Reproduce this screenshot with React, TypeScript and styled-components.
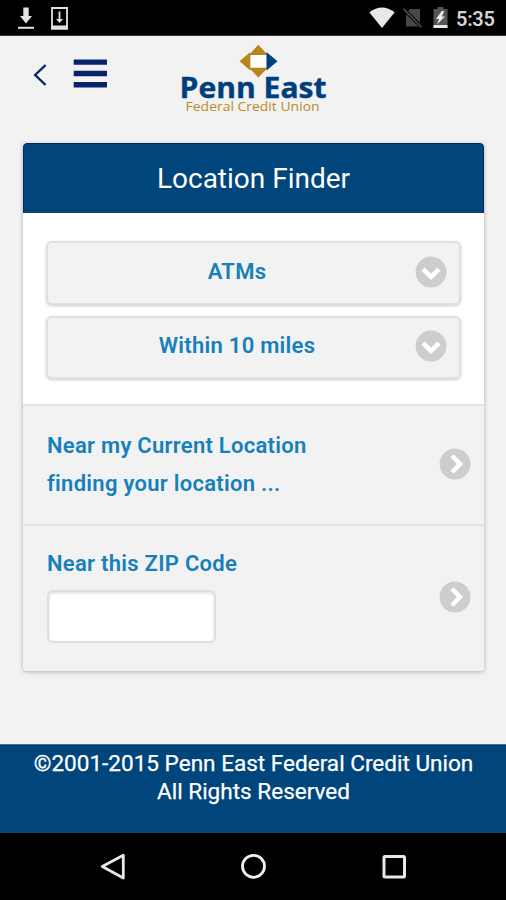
import React from "react";
import styled, { createGlobalStyle } from "styled-components";

const GlobalStyle = createGlobalStyle`
  *, *::before, *::after { box-sizing: border-box; }
  body { margin: 0; background: #f2f2f2; font-family: Roboto, "Liberation Sans", sans-serif; }
`;

const Screen = styled.div`
  width: 506px;
  height: 900px;
  display: flex;
  flex-direction: column;
  overflow: hidden;
  background: #f2f2f2;
`;

const StatusBar = styled.header`
  height: 36px;
  flex: none;
  display: flex;
  align-items: center;
  justify-content: space-between;
  padding: 0 10px 0 18px;
  background: #000;
  border-bottom: 1px solid #333;
`;

const StatusGroup = styled.div<{ $gap: number }>`
  display: flex;
  align-items: center;
  gap: ${(p) => p.$gap}px;
`;

const Clock = styled.span`
  width: 40px;
  padding-top: 3px;
  font-size: 20px;
  line-height: 24px;
  font-weight: 600;
  letter-spacing: -0.3px;
  color: #d4d4d4;
  white-space: nowrap;
`;

const TopBar = styled.nav`
  height: 107px;
  flex: none;
  display: flex;
  align-items: flex-start;
  padding: 8px 0 0 33px;
`;

const IconButton = styled.button<{ $width: number }>`
  width: ${(p) => p.$width}px;
  height: 34px;
  margin-top: 14px;
  padding: 0;
  border: 0;
  background: none;
  display: flex;
`;

const Logo = styled.svg`
  width: 152px;
  height: 70px;
  margin-left: 69px;
`;

const Card = styled.main`
  width: 461px;
  height: 528px;
  flex: none;
  margin-left: 23px;
  display: flex;
  flex-direction: column;
  border-radius: 4px;
  background: #fff;
  overflow: hidden;
  box-shadow: 0 1px 4px rgba(0, 0, 0, 0.28);
`;

const CardTitle = styled.h1`
  height: 70px;
  flex: none;
  margin: 0;
  border: 1px solid #002a68;
  border-bottom-color: #12417a;
  border-radius: 4px 4px 0 0;
  background: #00457c;
  color: #fff;
  font-size: 28px;
  font-weight: 400;
  line-height: 69px;
  text-align: center;
`;

const Filters = styled.section`
  height: 191px;
  flex: none;
  display: flex;
  flex-direction: column;
  gap: 11px;
  padding: 28px 23px 0;
`;

const Select = styled.button`
  height: 63.5px;
  display: grid;
  grid-template-columns: 1fr 32px;
  align-items: center;
  padding: 0 12px 2px 11px;
  border: 2px solid #e0e0e0;
  border-radius: 6px;
  background: #f2f2f2;
  box-shadow: 0 1px 3px rgba(0, 0, 0, 0.2);
  font-family: inherit;
  color: #1580bb;
`;

const Label = styled.span`
  display: block;
  font-size: 22px;
  font-weight: 600;
  line-height: 38px;
  letter-spacing: 0.28px;
  color: #1580bb;
  white-space: nowrap;
`;

const Option = styled.section<{ $height: number; $top: number }>`
  height: ${(p) => p.$height}px;
  flex: none;
  display: flex;
  justify-content: space-between;
  align-items: flex-start;
  padding: ${(p) => p.$top}px 13px 0 24px;
  border: solid #e2e2e2;
  border-width: 2px 0 0;
  background: #f2f2f2;
`;

const ArrowSlot = styled.div<{ $top: number }>`
  height: 32px;
  margin-top: ${(p) => p.$top}px;
`;

const ZipInput = styled.input`
  display: block;
  width: 169px;
  height: 53px;
  margin: 7px 0 0;
  padding: 0 10px;
  border: 2px solid #dedede;
  border-radius: 6px;
  background: #fff;
  box-shadow: inset 0 1px 3px rgba(0, 0, 0, 0.14);
  font: 22px Roboto, sans-serif;
`;

const Footer = styled.footer`
  height: 89px;
  flex: none;
  margin-top: auto;
  padding: 5px 0 0 1px;
  border-top: 1px solid #456f95;
  background: #00457c;
  color: #fff;
  font-size: 22.55px;
  line-height: 28px;
  text-align: center;
  -webkit-text-stroke: 0.25px #fff;
`;

const SystemNav = styled.nav`
  height: 67px;
  flex: none;
  display: flex;
  align-items: center;
  justify-content: center;
  gap: 108px;
  padding-bottom: 1px;
  background: #000;
`;

function RoundArrow({ down }: { down?: boolean }) {
  return (
    <svg width="32" height="32" viewBox="0 0 32 32" fill="none">
      <circle cx="16" cy="16" r="15.4" fill="#cdcdcd" />
      <path d={down ? "M8 13.2L16 20.8L24 13.2" : "M13 7.8L21 16L13 24.2"} stroke="#fff" strokeWidth="4.5" />
    </svg>
  );
}

function StatusIcons() {
  return (
    <>
      <StatusGroup $gap={17}>
        <svg width="16" height="24" viewBox="0 0 16 24" fill="#e2e2e2">
          <path d="M5.3 1.5h5.4v8.4H14L8 17.5 2 9.9h3.3z" />
          <path d="M0 20.8h16v2H0z" />
        </svg>
        <svg width="17" height="24" viewBox="0 0 17 24">
          <path d="M1 2V22.5H16V2z" fill="none" stroke="#e2e2e2" strokeWidth="1.8" />
          <path d="M0 19.5h17v4H0zM0 1h17v2H0zM7.6 5.5h1.8v7.5H12L8.5 17 5 13h2.6z" fill="#e2e2e2" />
        </svg>
      </StatusGroup>
      <StatusGroup $gap={8}>
        <svg width="26" height="22" viewBox="0 0 26 22">
          <path d="M0.3 5.2Q13-4.2 25.7 5.2L13 21z" fill="#e8e8e8" />
        </svg>
        <svg width="20" height="22" viewBox="0 0 20 22">
          <path d="M7 2H17V19.5H3V6z" fill="#484848" />
          <path d="M0 1.5L19 20.5" stroke="#000" strokeWidth="3.4" />
          <path d="M0.5 1.8L18.5 20.3" stroke="#505050" strokeWidth="1.6" />
        </svg>
        <svg width="17" height="22" viewBox="-2 0 17 22">
          <path d="M4.5 0h6v2H14.5V21H.5V2h4z" fill="#555" />
          <path d="M.5 18h14v3H.5zM8.8 4L3 12h3L4 17.4l8-7.9H8.9L11.2 4z" fill="#e8e8e8" />
        </svg>
        <Clock>5:35</Clock>
      </StatusGroup>
    </>
  );
}

export default function App() {
  return (
    <>
      <GlobalStyle />
      <Screen>
        <StatusBar>
          <StatusIcons />
        </StatusBar>

        <TopBar>
          <IconButton $width={14} aria-label="Back">
            <svg width="14" height="34" viewBox="0 0 14 34" fill="none">
              <path d="M12.6 7L2.2 17L12.6 27" stroke="#07246b" strokeWidth="2.4" />
            </svg>
          </IconButton>
          <IconButton $width={60} aria-label="Menu">
            <svg width="60" height="34" viewBox="0 0 60 34" fill="#07246b">
              <path d="M26.7 1.6h33.3v5.2h-33.3zM26.7 12.8h33.3v5.4h-33.3zM26.7 24.1h33.3v5.3h-33.3z" />
            </svg>
          </IconButton>
          <Logo viewBox="176 44 152 70">
            <path d="M258.3 44.8L267.8 55H249z" fill="#b68618" />
            <path d="M258.3 77.4L267.8 67.8H249z" fill="#b68618" />
            <path d="M239.5 61.3L250.3 52V70.6z" fill="#b68618" />
            <path d="M277.5 61.3L266.5 52V70.6z" fill="#00427d" />
            <path d="M251 55.2h15v12h-15z" fill="#fff" />
            <text x="179.6" y="97.8" fontFamily="Open Sans, sans-serif" fontSize="29" fontWeight="700" fill="#003f7e" stroke="#003f7e" strokeWidth="0.4" textLength="147" lengthAdjust="spacingAndGlyphs">Penn East</text>
            <text x="185.6" y="110.8" fontFamily="Open Sans, sans-serif" fontSize="12.8" fontWeight="500" fill="#bb8a27" textLength="134" lengthAdjust="spacingAndGlyphs">Federal Credit Union</text>
          </Logo>
        </TopBar>

        <Card>
          <CardTitle>Location Finder</CardTitle>
          <Filters>
            <Select>
              <Label>ATMs</Label>
              <RoundArrow down />
            </Select>
            <Select>
              <Label>Within 10 miles</Label>
              <RoundArrow down />
            </Select>
          </Filters>
          <Option $height={120} $top={21}>
            <div>
              <Label>Near my Current Location</Label>
              <Label>finding your location ...</Label>
            </div>
            <ArrowSlot $top={21}>
              <RoundArrow />
            </ArrowSlot>
          </Option>
          <Option $height={147} $top={19}>
            <div>
              <Label>Near this ZIP Code</Label>
              <ZipInput aria-label="ZIP Code" />
            </div>
            <ArrowSlot $top={36}>
              <RoundArrow />
            </ArrowSlot>
          </Option>
        </Card>

        <Footer>
          ©2001-2015 Penn East Federal Credit Union
          <br />
          All Rights Reserved
        </Footer>

        <SystemNav>
          <svg width="32" height="32" viewBox="0 0 32 32" fill="none" stroke="#e8e8e8" strokeWidth="2.8">
            <path d="M26.3 5.3V28L5.3 16.6z" strokeLinejoin="round" />
          </svg>
          <svg width="32" height="32" viewBox="0 0 32 32" fill="none" stroke="#f0f0f0" strokeWidth="2.8">
            <circle cx="16.5" cy="16.3" r="11" />
          </svg>
          <svg width="32" height="32" viewBox="0 0 32 32" fill="none" stroke="#e8e8e8" strokeWidth="3">
            <rect x="7" y="6.5" width="20.5" height="20.5" rx="1" />
          </svg>
        </SystemNav>
      </Screen>
    </>
  );
}
